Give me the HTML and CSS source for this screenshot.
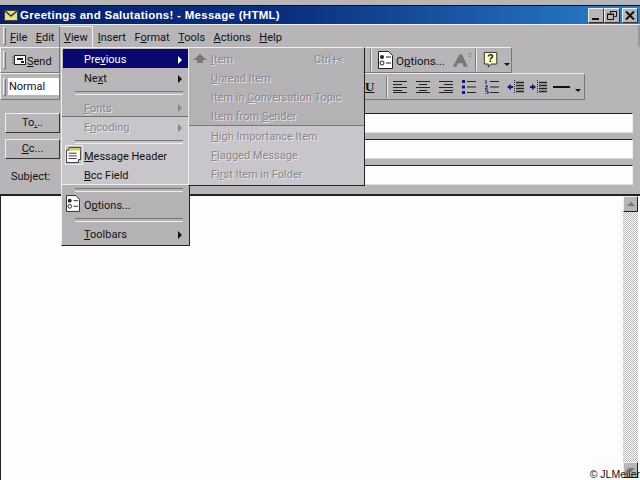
FILE: index.html
```html
<!DOCTYPE html>
<html lang="en">
<head>
<meta charset="utf-8">
<title>Greetings and Salutations! - Message (HTML)</title>
<link rel="stylesheet" href="styles.css">
</head>
<body>
<div class="window">
  <div class="titlebar">
    <svg class="title-icon" width="14" height="11" viewBox="0 0 14 11"><rect x="0.5" y="0.5" width="13" height="10" fill="#e8dc88" stroke="#444"/><path d="M1 1l6 5 6-5" fill="none" stroke="#333" stroke-width="1.5"/></svg>
    <span class="title-text">Greetings and Salutations! - Message (HTML)</span>
    <span class="win-btns">
      <span class="win-btn"><svg width="12" height="11" viewBox="0 0 12 11"><rect x="2" y="8" width="7" height="2" fill="#111"/></svg></span>
      <span class="win-btn"><svg width="12" height="11" viewBox="0 0 12 11"><path d="M4.500 3V1.500H10.500V6.500H8.500M1.500 4.500H7.500V9.500H1.500Z" fill="none" stroke="#111"/><path d="M1 4H8M4 1.500H11" stroke="#111"/></svg></span>
      <span class="win-btn"><svg width="12" height="11" viewBox="0 0 12 11"><path d="M2 1.500L10 9.500M10 1.500L2 9.500" stroke="#111" stroke-width="2"/></svg></span>
    </span>
  </div>

  <div class="menubar">
    <span class="grip"></span>
    <span class="mi"><u>F</u>ile</span>
    <span class="mi"><u>E</u>dit</span>
    <span class="mi mi-open"><u>V</u>iew</span>
    <span class="mi"><u>I</u>nsert</span>
    <span class="mi">F<u>o</u>rmat</span>
    <span class="mi"><u>T</u>ools</span>
    <span class="mi"><u>A</u>ctions</span>
    <span class="mi"><u>H</u>elp</span>
  </div>

  <div class="toolbar tb1">
    <div class="band band-send">
      <span class="grip"></span>
      <svg class="send-icon" width="14" height="12" viewBox="0 0 14 12"><path d="M0 3h2M0 6h2M0 9h2" stroke="#555"/><rect x="2.500" y="1.500" width="11" height="9" fill="#fff" stroke="#222"/><rect x="5" y="4" width="6" height="2" fill="#222"/><rect x="9" y="7" width="3" height="2" fill="#222"/></svg>
      <span class="send-label"><u>S</u>end</span>
    </div>
    <div class="band band-options">
      <span class="sep"></span>
      <svg class="opt-icon" width="15" height="18" viewBox="0 0 15 18"><path d="M.5.500H10.500L14.500 4.500V17.500H.5Z" fill="#fff" stroke="#222"/><circle cx="4" cy="6" r="2" fill="#222"/><circle cx="4" cy="12" r="2" fill="none" stroke="#222"/><path d="M8 6h5M8 12h5" stroke="#222"/></svg>
      <span class="opt-label">O<u>p</u>tions...</span>
      <svg class="font-a" width="20" height="18" viewBox="0 0 24 20"><path d="M1 18L9 3h3l7 15h-5l-1.500-4H7l-1.500 4Z" fill="#777"/><path d="M19 2h4v1l-3 3h3" fill="none" stroke="#888"/></svg>
      <span class="sep"></span>
      <svg class="help" width="16" height="18" viewBox="0 0 18 20"><path d="M1.500 1.500H15.500V14.500H9L6 18V14.500H1.500Z" fill="#ffffc8" stroke="#222"/><text x="8.500" y="12" font-family="Liberation Sans" font-size="12" font-weight="700" text-anchor="middle" fill="#111">?</text></svg>
      <span class="drop"></span>
    </div>
  </div>

  <div class="toolbar tb2">
    <div class="band band-style">
      <span class="grip"></span>
      <span class="style-box">Normal</span>
    </div>
    <div class="band band-format">
      <span class="u-btn">U</span>
      <span class="sep"></span>
      <svg class="fmt" width="16" height="14" viewBox="0 0 16 14"><path d="M1 1.500h14M1 4.500h9M1 7.500h14M1 10.500h9M1 12.500h14" stroke="#222"/></svg>
      <svg class="fmt" width="16" height="14" viewBox="0 0 16 14"><path d="M1 1.500h14M4 4.500h8M1 7.500h14M4 10.500h8M1 12.500h14" stroke="#222"/></svg>
      <svg class="fmt" width="16" height="14" viewBox="0 0 16 14"><path d="M1 1.500h14M6 4.500h9M1 7.500h14M6 10.500h9M1 12.500h14" stroke="#222"/></svg>
      <svg class="fmt" width="16" height="14" viewBox="0 0 16 14"><path d="M1 0h3v3H1ZM1 5.500h3v3H1ZM1 11h3v3H1Z" fill="#0a1a80"/><path d="M6 1.500h9M6 7h9M6 12.500h9" stroke="#222"/></svg>
      <svg class="fmt" width="16" height="14" viewBox="0 0 16 14"><path d="M2 0v4M1 6h3L1 9h3M1 11h3v3H1" stroke="#0a1a80" fill="none"/><path d="M6 1.500h9M6 7h9M6 12.500h9" stroke="#222"/></svg>
      <svg class="fmt" width="18" height="14" viewBox="0 0 18 14"><path d="M0 7l4-3v2h2v2H4v2Z" fill="#0a1a80"/><path d="M7.500 0v14" stroke="#222" stroke-dasharray="1 1"/><path d="M9 2.500h8M9 5.500h8M9 8.500h8M9 11.500h8" stroke="#222" stroke-width="1.300"/></svg>
      <svg class="fmt fmt-tight" width="18" height="14" viewBox="0 0 18 14"><path d="M6 7L2 4v2H0v2h2v2Z" fill="#0a1a80"/><path d="M7.500 0v14" stroke="#222" stroke-dasharray="1 1"/><path d="M9 2.500h8M9 5.500h8M9 8.500h8M9 11.500h8" stroke="#222" stroke-width="1.300"/></svg>
      <span class="hr-line fmt-tight"></span>
      <span class="drop"></span>
    </div>
  </div>

  <div class="headers">
    <div class="hrow">
      <span class="addr-btn">To<u>.</u>..</span>
      <span class="field"></span>
    </div>
    <div class="hrow">
      <span class="addr-btn"><u>C</u>c...</span>
      <span class="field"></span>
    </div>
    <div class="hrow">
      <span class="subject-label">Subject:</span>
      <span class="field"></span>
    </div>
  </div>

  <div class="body-area">
    <div class="msg"></div>
    <div class="scrollbar">
      <span class="sb-btn"><i class="up"></i></span>
      <span class="sb-track"></span>
      <span class="sb-btn"><i class="down"></i></span>
    </div>
  </div>
</div>

<div class="menu view-menu">
  <div class="row active"><span class="lbl">Pre<u>v</u>ious</span><i class="arrow"></i></div>
  <div class="row"><span class="lbl">Ne<u>x</u>t</span><i class="arrow"></i></div>
  <div class="divider"></div>
  <div class="row off tall"><span class="lbl"><u>F</u>onts</span><i class="arrow"></i></div>
  <div class="row off"><span class="lbl">E<u>n</u>coding</span><i class="arrow"></i></div>
  <div class="divider"></div>
  <div class="row"><svg class="mi-icon hdr-icon" width="16" height="18" viewBox="0 0 18 18"><path d="M.5 3.500H3.500V.5H16.500V14H14V17.500H.5Z" fill="#fff" stroke="#222"/><rect x="4" y="1" width="12" height="3" fill="#d8c860"/><path d="M3 7h9M3 10h9M3 13h9" stroke="#222"/></svg><span class="lbl"><u>M</u>essage Header</span></div>
  <div class="row"><span class="lbl"><u>B</u>cc Field</span></div>
  <div class="divider wide"></div>
  <div class="row"><svg class="mi-icon" width="14" height="17" viewBox="0 0 15 18"><path d="M.5.500H10.500L14.500 4.500V17.500H.5Z" fill="#fff" stroke="#222"/><circle cx="4" cy="6" r="2" fill="#222"/><circle cx="4" cy="12" r="2" fill="none" stroke="#222"/><path d="M8 6h5M8 12h5" stroke="#222"/></svg><span class="lbl">O<u>p</u>tions...</span></div>
  <div class="divider"></div>
  <div class="row"><span class="lbl"><u>T</u>oolbars</span><i class="arrow"></i></div>
</div>

<div class="menu sub-menu">
  <div class="row off"><svg class="up-arrow" width="16" height="10" viewBox="0 0 16 10"><path d="M8 0l7 6h-4v3H5V6H1Z" fill="#7a787c"/></svg><span class="lbl"><u>I</u>tem</span><span class="key">Ctrl+&lt;</span></div>
  <div class="row off"><span class="lbl"><u>U</u>nread Item</span></div>
  <div class="row off"><span class="lbl">Item in <u>C</u>onversation Topic</span></div>
  <div class="row off"><span class="lbl">Item from <u>S</u>ender</span></div>
  <div class="rule"></div>
  <div class="row off"><span class="lbl"><u>H</u>igh Importance Item</span></div>
  <div class="row off"><span class="lbl"><u>F</u>lagged Message</span></div>
  <div class="row off"><span class="lbl">Fi<u>r</u>st Item in Folder</span></div>
</div>

<div class="credit">© JLMeller</div>
</body>
</html>
```

FILE: styles.css
```css
* { box-sizing: border-box; }
html, body { margin: 0; padding: 0; }
body {
  width: 640px;
  height: 480px;
  overflow: hidden;
  position: relative;
  background: #b8b5b8;
  font-family: Roboto, "Liberation Sans", sans-serif;
  font-size: 11px;
  color: #111;
}
.window { display: flex; flex-direction: column; height: 480px; padding-top: 5px; }
.titlebar {
  height: 20px;
  display: flex;
  align-items: center;
  padding: 0 2px 0 4px;
  background: linear-gradient(90deg, #08206a 0%, #0a2f80 45%, #2a80c8 100%);
  border-top: 1px solid #111;
  border-bottom: 1px solid #eee;
}
.title-icon { margin-right: 2px; }
.title-text { color: #fff; font-family: "Liberation Sans", sans-serif; font-weight: 700; font-size: 11.500px; letter-spacing: .28px; flex: 1; }
.win-btns { display: flex; }
.win-btns .win-btn:nth-child(2) { margin-right: 2px; }
.win-btn {
  width: 16px; height: 15px;
  display: flex; align-items: center; justify-content: center;
  background: #b8b5b8;
  border: 1px solid; border-color: #eee #333 #333 #eee;
}
.menubar {
  height: 22px;
  display: flex;
  align-items: center;
  padding: 0 6px 0 3px;
  border-right: 2px solid #999;
}
.grip {
  width: 3px; height: 18px;
  border: 1px solid; border-color: #eee #777 #777 #eee;
  flex: none;
}
.mi { padding: 0 4.500px 0 4px; height: 21px; line-height: 23px; }
.mi-open { padding: 0 4px; margin-right: 1px; border: 1px solid; border-color: #eee #eee #777 #777; border-bottom: 0; line-height: 22px; }
.toolbar { display: flex; align-items: center; }
.tb1 { height: 26px; }
.tb2 { height: 27px; }
.band {
  display: flex; align-items: center;
  height: 100%;
  border: 1px solid; border-color: #eee #777 #777 #eee;
}
.band-send { width: 60px; padding-left: 2px; }
.send-icon { margin: 0 1px 0 6px; flex: none; }
.send-label { white-space: nowrap; padding-top: 2px; }
.band-options { margin-left: 300px; width: 152px; padding-left: 9px; }
.sep {
  width: 2px; height: 22px;
  border-left: 1px solid #777; border-right: 1px solid #eee;
  flex: none;
}
.opt-icon { margin-left: 6px; flex: none; }
.opt-label { margin-left: 3px; width: 50px; flex: none; font-size: 11.500px; white-space: nowrap; padding-top: 2px; }
.font-a { margin: 0 3px 0 6px; flex: none; }
.help { margin-left: 6px; flex: none; }
.drop { width: 0; height: 0; border: 3px solid transparent; border-top: 3px solid #111; border-bottom: 0; margin: 8px 0 0 5px; flex: none; }
.band-style { width: 60px; padding-left: 2px; }
.style-box { flex: 1; background: #fff; height: 17px; line-height: 18px; padding-left: 1px; margin-left: 2px; }
.band-format { margin-left: 300px; width: 225px; gap: 7px; padding-left: 4px; }
.u-btn { font: 700 13px "Liberation Serif", serif; text-decoration: underline; width: 11px; }
.band-format .sep { margin: 0 -3px 0 3px; }
.fmt { flex: none; }
.fmt-tight { margin-left: -2px; }
.hr-line { width: 17px; height: 2px; background: #111; }
.band-format .drop { margin-left: -2px; margin-top: 8px; }
.headers { padding: 13px 7px 0 5px; display: flex; flex-direction: column; gap: 6px; }
.hrow { display: flex; align-items: stretch; height: 20px; }
.addr-btn {
  width: 55px; flex: none;
  text-align: center; line-height: 18px;
  background: #b8b5b8;
  border: 1px solid; border-color: #eee #333 #333 #eee;
}
.subject-label { width: 55px; flex: none; padding-left: 6px; line-height: 24px; }
.field {
  flex: 1; margin-left: 1px;
  background: #fffcff;
  border: 1px solid; border-color: #222 #eee #ddd #777;
}
.body-area {
  margin-top: 9px;
  flex: 1;
  display: flex;
  background: #fffcff;
  border-top: 2px solid #222;
  border-left: 1px solid #222;
  min-height: 0;
}
.msg { flex: 1; }
.scrollbar { width: 15px; margin-right: 2px; display: flex; flex-direction: column; }
.sb-btn {
  height: 16px; flex: none;
  background: #b8b5b8;
  border: 1px solid; border-color: #eee #222 #222 #eee;
  display: flex; align-items: center; justify-content: center;
}
.sb-track { flex: 1; background: repeating-conic-gradient(#b8b5b8 0% 25%, #fff 0% 50%) 0 0 / 2px 2px; }
.sb-btn:last-child { margin-bottom: 2px; }
.sb-btn i { width: 0; height: 0; border: 4px solid transparent; }
.sb-btn .up { border-bottom: 4px solid #777; border-top: 0; }
.sb-btn .down { border-top: 4px solid #777; border-bottom: 0; }
.menu {
  position: absolute;
  border: 1px solid; border-color: #eee #222 #222 #eee;
}
.view-menu {
  left: 61px; top: 47px;
  width: 129px; height: 199px;
  padding: 1px;
  background: linear-gradient(180deg, #b9b6b9 0, #b9b6b9 68px, #6f6d70 68px, #6f6d70 69px, #c9c6cb 69px, #c9c6cb 136px, #f0eef0 136px, #f0eef0 137px, #b5b2b5 137px, #b5b2b5 100%);
}
.row { height: 19px; display: flex; align-items: center; position: relative; padding-top: 2px; }
.tall { height: 20px; }
.lbl { position: absolute; left: 21px; white-space: nowrap; }
.active { background: #08086e; color: #fff; }
.off { color: #8a878c; text-shadow: 1px 1px 0 #e8e6ea; }
.arrow { position: absolute; right: 6px; width: 0; height: 0; border: 4px solid transparent; border-left: 4px solid currentColor; border-right: 0; }
.divider { height: 10px; margin: 0 5px 0 12px; position: relative; }
.wide { height: 11px; }
.divider::after { content: ""; position: absolute; left: 0; right: 0; top: 4px; height: 2px; border-top: 1px solid #777; border-bottom: 1px solid #eee; }
.mi-icon { position: absolute; left: 3px; top: 0; }
.hdr-icon { outline: 1px solid #eceaec; }
.sub-menu {
  left: 188px; top: 47px;
  width: 177px; height: 139px;
  padding-top: 1px;
  background: linear-gradient(180deg, #b5b2b5 0, #b5b2b5 77px, #c9c6cb 77px, #c9c6cb 100%);
}
.sub-menu .lbl { left: 22px; }
.up-arrow { position: absolute; left: 3px; top: 5px; }
.key { position: absolute; right: 21px; }
.rule { height: 1px; background: #777; }
.credit {
  position: absolute;
  right: 0; bottom: 0;
  font-family: "Liberation Sans", sans-serif;
  font-size: 10.500px;
  line-height: 11px;
  color: #111;
}
```
